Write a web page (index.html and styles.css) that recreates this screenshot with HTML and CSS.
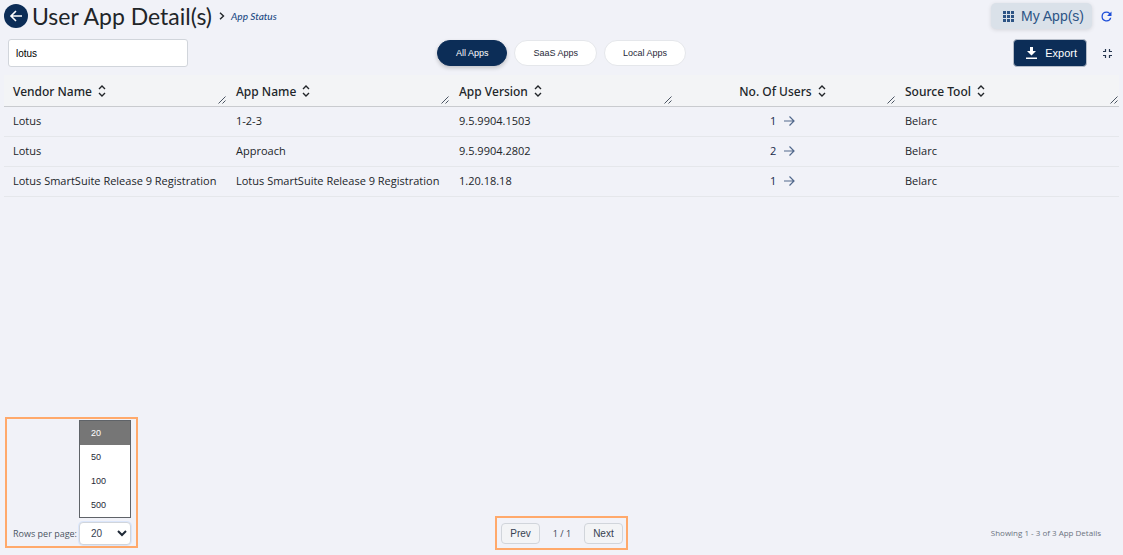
FILE: index.html
```
<!DOCTYPE html>
<html lang="en">
<head>
    <meta charset="UTF-8">
    <meta name="viewport" content="width=device-width, initial-scale=1.0">
    <title>User App Detail(s)</title>
    <link rel="stylesheet" href="styles.css">
</head>
<body>
    <!-- Shared icons -->
    <svg class="icon-defs" width="0" height="0" aria-hidden="true">
        <symbol id="sort" viewBox="0 0 8 12">
            <path d="M1 4l3-3 3 3M1 8l3 3 3-3" fill="none" stroke="currentColor" stroke-width="1.400"/>
        </symbol>
        <symbol id="arrow" viewBox="0 0 12 12">
            <path d="M1 6h10M6.500 1.500L11 6l-4.500 4.500" fill="none" stroke="currentColor" stroke-width="1.200"/>
        </symbol>
        <symbol id="grip" viewBox="0 0 8 8">
            <path d="M.5 7.500l7-7M4.500 7.500l3-3" fill="none" stroke="currentColor" stroke-width="1"/>
        </symbol>
    </svg>

    <div class="page">
        <header class="top-bar">
            <button class="back-button" aria-label="Back">
                <svg width="16" height="16" viewBox="0 0 16 16"><path d="M14 8H3M8 3L3 8l5 5" fill="none" stroke="currentColor" stroke-width="1.600"/></svg>
            </button>
            <h1>User App Detail(s)</h1>
            <svg class="crumb-arrow" width="6" height="8" viewBox="0 0 6 8"><path d="M1 .7L4.500 4 1 7.300" fill="none" stroke="currentColor" stroke-width="1.400"/></svg>
            <a class="crumb" href="#">App Status</a>
            <div class="top-actions">
                <button class="my-apps">
                    <svg width="11" height="11" viewBox="0 0 11 11"><path d="M0 0h3v3H0zM4 0h3v3H4zM8 0h3v3H8zM0 4h3v3H0zM4 4h3v3H4zM8 4h3v3H8zM0 8h3v3H0zM4 8h3v3H4zM8 8h3v3H8z" fill="currentColor"/></svg>
                    My App(s)
                </button>
                <button class="icon-button refresh" aria-label="Refresh">
                    <svg width="15" height="15" viewBox="0 0 24 24"><path d="M17.650 6.350A7.960 7.960 0 0 0 12 4a8 8 0 1 0 7.730 10h-2.080A6 6 0 1 1 12 6c1.660 0 3.140.690 4.220 1.780L13 11h7V4z" fill="currentColor"/></svg>
                </button>
            </div>
        </header>

        <div class="toolbar">
            <input class="search" type="text" value="lotus" aria-label="Search apps">
            <div class="filters">
                <button class="pill active">All Apps</button>
                <button class="pill">SaaS Apps</button>
                <button class="pill">Local Apps</button>
            </div>
            <div class="toolbar-actions">
                <button class="export">
                    <svg width="11" height="13" viewBox="0 0 11 13"><path d="M4 0h3v4h3L5.500 8.500 1 4h3zM0 10.500h11V12H0z" fill="currentColor"/></svg>
                    Export
                </button>
                <button class="icon-button collapse" aria-label="Collapse">
                    <svg width="9" height="9" viewBox="0 0 9 9"><path d="M0 2.500h2.500V0M6.500 0v2.500H9M0 6.500h2.500V9M6.500 9V6.500H9" fill="none" stroke="currentColor" stroke-width="1.200"/></svg>
                </button>
            </div>
        </div>

        <table class="apps">
            <thead>
                <tr>
                    <th>Vendor Name <svg class="sort"><use href="#sort"/></svg><svg class="grip"><use href="#grip"/></svg></th>
                    <th>App Name <svg class="sort"><use href="#sort"/></svg><svg class="grip"><use href="#grip"/></svg></th>
                    <th>App Version <svg class="sort"><use href="#sort"/></svg><svg class="grip"><use href="#grip"/></svg></th>
                    <th class="users">No. Of Users <svg class="sort"><use href="#sort"/></svg><svg class="grip"><use href="#grip"/></svg></th>
                    <th>Source Tool <svg class="sort"><use href="#sort"/></svg><svg class="grip"><use href="#grip"/></svg></th>
                </tr>
            </thead>
            <tbody>
                <tr>
                    <td>Lotus</td>
                    <td>1-2-3</td>
                    <td>9.5.9904.1503</td>
                    <td class="users"><a href="#">1 <svg class="arrow"><use href="#arrow"/></svg></a></td>
                    <td>Belarc</td>
                </tr>
                <tr>
                    <td>Lotus</td>
                    <td>Approach</td>
                    <td>9.5.9904.2802</td>
                    <td class="users"><a href="#">2 <svg class="arrow"><use href="#arrow"/></svg></a></td>
                    <td>Belarc</td>
                </tr>
                <tr>
                    <td>Lotus SmartSuite Release 9 Registration</td>
                    <td>Lotus SmartSuite Release 9 Registration</td>
                    <td>1.20.18.18</td>
                    <td class="users"><a href="#">1 <svg class="arrow"><use href="#arrow"/></svg></a></td>
                    <td>Belarc</td>
                </tr>
            </tbody>
        </table>

        <footer class="footer">
            <div class="outlined rows-box">
                <ul class="options" role="listbox" aria-label="Rows per page">
                    <li class="selected" role="option" aria-selected="true">20</li>
                    <li role="option" aria-selected="false">50</li>
                    <li role="option" aria-selected="false">100</li>
                    <li role="option" aria-selected="false">500</li>
                </ul>
                <div class="rows-field">
                    <label for="rows">Rows per page:</label>
                    <div class="select-wrap">
                        <select id="rows">
                            <option selected>20</option>
                            <option>50</option>
                            <option>100</option>
                            <option>500</option>
                        </select>
                        <svg class="chevron" width="10" height="7" viewBox="0 0 10 7"><path d="M1 1l4 4 4-4" fill="none" stroke="currentColor" stroke-width="2"/></svg>
                    </div>
                </div>
            </div>
            <div class="outlined pager">
                <button>Prev</button>
                <span>1 / 1</span>
                <button>Next</button>
            </div>
            <p class="summary">Showing 1 - 3 of 3 App Details</p>
        </footer>
    </div>
</body>
</html>
```
FILE: styles.css
```
/* Base Styles */
* {
    box-sizing: border-box;
}

body {
    margin: 0;
    background-color: #f1f2f8;
    color: #212529;
    font-family: "Open Sans", "Segoe UI", sans-serif;
    font-size: 11px;
}

button,
input,
select {
    font-family: "Liberation Sans", Arial, sans-serif;
    font-size: 10px;
}

button {
    cursor: pointer;
}

a {
    text-decoration: none;
}

.icon-defs {
    display: none;
}

.page {
    display: flex;
    flex-direction: column;
    min-height: 100vh;
    padding: 2px 4px 5px;
}

/* Top bar */
.top-bar {
    display: flex;
    align-items: center;
    height: 28px;
}

.back-button {
    display: flex;
    align-items: center;
    justify-content: center;
    width: 24px;
    height: 24px;
    padding: 0;
    border: none;
    border-radius: 50%;
    background-color: #0c2d57;
    color: #ffffff;
}

h1 {
    margin: 0 7px 0 4px;
    font-family: Lato, sans-serif;
    font-size: 23px;
    font-weight: 400;
    line-height: 28px;
}

.crumb-arrow {
    margin-right: 6px;
}

.crumb {
    color: #1c4a84;
    font-family: Lato, sans-serif;
    font-size: 10px;
    font-style: italic;
    font-weight: 500;
}

.top-actions {
    display: flex;
    align-items: center;
    gap: 6px;
    margin-left: auto;
    padding-right: 5px;
}

.my-apps {
    display: flex;
    align-items: center;
    gap: 7px;
    height: 26px;
    padding: 0 8px 0 12px;
    border: none;
    border-radius: 5px;
    background-color: #dae1e9;
    box-shadow: 0 1px 4px rgba(0, 0, 0, 0.12);
    color: #2d5485;
    font-size: 14px;
}

.icon-button {
    display: flex;
    align-items: center;
    justify-content: center;
    width: 16px;
    height: 16px;
    padding: 0;
    border: none;
    background: none;
}

.refresh {
    color: #1d4ed8;
}

/* Toolbar */
.toolbar {
    display: grid;
    grid-template-columns: 1fr auto 1fr;
    align-items: center;
    height: 28px;
    margin: 9px 4px 8px;
}

.search {
    width: 180px;
    height: 28px;
    padding: 0 7px;
    border: 1px solid #d1d5db;
    border-radius: 3px;
    background-color: #ffffff;
    color: #000000;
    font-size: 10px;
}

.filters {
    display: flex;
    gap: 7px;
}

.pill {
    height: 26px;
    padding: 0 18px;
    border: 1px solid #e5e7eb;
    border-radius: 13px;
    background-color: #ffffff;
    color: #1f2937;
    font-size: 9px;
}

.pill.active {
    border-color: #0c2d57;
    background-color: #0c2d57;
    box-shadow: 0 2px 4px rgba(0, 0, 0, 0.2);
    color: #ffffff;
}

.toolbar-actions {
    display: flex;
    align-items: center;
    justify-content: flex-end;
    gap: 12px;
}

.export {
    display: flex;
    align-items: center;
    gap: 8px;
    height: 28px;
    padding: 0 9px 0 12px;
    border: 1px solid #b5bcc8;
    border-radius: 4px;
    background-color: #0c2d57;
    color: #ffffff;
    font-size: 11px;
}

.collapse {
    color: #26364f;
}

/* Table */
.apps {
    width: 100%;
    border-collapse: collapse;
    table-layout: fixed;
}

th,
td {
    padding: 0 8px 0 9px;
    text-align: left;
}

th {
    position: relative;
    height: 31px;
    padding-top: 2px;
    border-bottom: 1px solid #c9cbcf;
    background-color: #f3f4f6;
    font-family: "Noto Sans", "Segoe UI", sans-serif;
    font-size: 12px;
    font-weight: 500;
}

td {
    height: 30px;
    padding-bottom: 2px;
    border-bottom: 1px solid #e5e7eb;
    font-size: 11px;
}

.users {
    padding-right: 13px;
    text-align: center;
}

.users a {
    color: #17294a;
    font-weight: 500;
}

.sort {
    width: 8px;
    height: 12px;
    margin-left: 3px;
    vertical-align: -1px;
}

.grip {
    position: absolute;
    right: 1px;
    bottom: 2px;
    width: 8px;
    height: 8px;
    color: #4b5563;
}

.arrow {
    width: 12px;
    height: 12px;
    margin-left: 4px;
    color: #52698c;
    vertical-align: -2px;
}

/* Footer */
.footer {
    display: grid;
    grid-template-columns: 1fr auto 1fr;
    align-items: end;
    margin-top: auto;
}

.outlined {
    border: 2px solid #ffa96b;
}

.rows-box {
    display: flex;
    flex-direction: column;
    align-items: flex-end;
    justify-self: start;
    margin: 0 0 2px 1px;
    padding: 1px 5px 1px 6px;
}

.options {
    width: 52px;
    margin: 0 0 4px;
    padding: 0;
    border: 1px solid #5f6368;
    background-color: #ffffff;
    font-family: "Liberation Sans", Arial, sans-serif;
    font-size: 9px;
    list-style: none;
}

.options li {
    padding-left: 11px;
    color: #1f2937;
    line-height: 24px;
}

.options .selected {
    background-color: #767676;
    color: #ffffff;
}

.rows-field {
    display: flex;
    align-items: center;
    gap: 2px;
}

.rows-field label {
    color: #4b5563;
    font-size: 9px;
}

.select-wrap {
    position: relative;
}

.select-wrap select {
    display: block;
    width: 52px;
    height: 23px;
    padding: 0 11px;
    border: 1px solid #d1d5db;
    border-radius: 4px;
    background-color: #ffffff;
    box-shadow: 0 0 0 1px #dbe6fb;
    color: #374151;
    appearance: none;
}

.chevron {
    position: absolute;
    top: 8px;
    right: 4px;
    color: #1f2937;
    pointer-events: none;
}

.pager {
    display: flex;
    align-items: center;
    gap: 13px;
    padding: 5px 3px 4px 4px;
}

.pager button {
    height: 21px;
    padding: 0 8px;
    border: 1px solid #d1d5db;
    border-radius: 4px;
    background-color: #f3f4f6;
    color: #374151;
}

.pager span {
    color: #374151;
    font-size: 9px;
}

.summary {
    justify-self: end;
    margin: 0 18px 12px 0;
    color: #6b7280;
    font-size: 8px;
    font-weight: 500;
}
```
